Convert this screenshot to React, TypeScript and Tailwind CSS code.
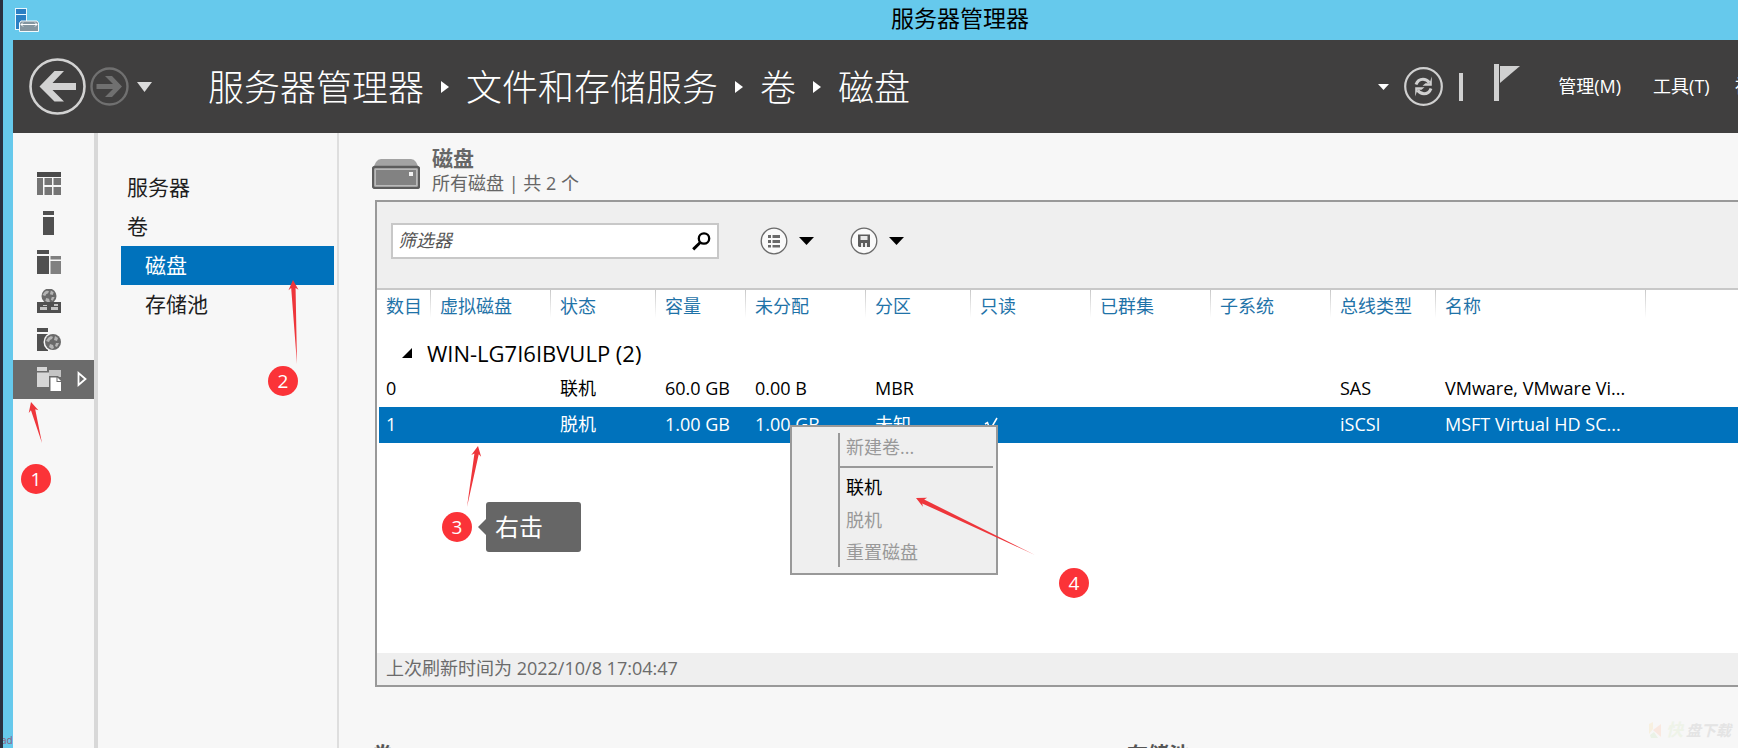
import React from 'react';

const crumbs = ['服务器管理器', '文件和存储服务', '卷', '磁盘'];

const columns = ['数目', '虚拟磁盘', '状态', '容量', '未分配', '分区', '只读', '已群集', '子系统', '总线类型', '名称', ''];

const columnWidths = [
  'w-[51px]', 'w-[120px]', 'w-[105px]', 'w-[90px]', 'w-[120px]', 'w-[105px]',
  'w-[120px]', 'w-[120px]', 'w-[120px]', 'w-[105px]', 'w-[210px]', 'w-auto',
];

type Disk = { cells: string[]; readOnly: boolean; selected: boolean };

const disks: Disk[] = [
  { cells: ['0', '', '联机', '60.0 GB', '0.00 B', 'MBR', '', '', '', 'SAS', 'VMware, VMware Vi...', ''], readOnly: false, selected: false },
  { cells: ['1', '', '脱机', '1.00 GB', '1.00 GB', '未知', '', '', '', 'iSCSI', 'MSFT Virtual HD SC...', ''], readOnly: true, selected: true },
];

function AppIcon() {
  return (
    <svg width="24" height="25" viewBox="0 0 24 25" aria-hidden="true">
      <rect x="0.5" y="0.5" width="11" height="21" fill="#2b7fc4" stroke="#e9f6fc" />
      <path d="M1 6.500h10" stroke="#e9f6fc" />
      <path d="M6 13h16l1.500 2v8.500h-19V15z" fill="#8395a0" stroke="#f3fafd" />
      <path d="M6 16.500h16M8 14.500l-2 2 2 2M20 14.500l2 2-2 2" stroke="#fff" fill="none" />
    </svg>
  );
}

function BackIcon() {
  return (
    <svg width="57" height="57" viewBox="0 0 57 57" aria-hidden="true">
      <circle cx="28.500" cy="28.500" r="27" fill="none" stroke="#d2d2d2" strokeWidth="2.600" />
      <path d="M10.500 28.500 25.500 13h9.500L23.500 25H47v7H23.500L35 43.500h-9.500z" fill="#d2d2d2" />
    </svg>
  );
}

function ForwardIcon() {
  return (
    <svg width="39" height="39" viewBox="0 0 39 39" aria-hidden="true">
      <circle cx="19.500" cy="19.500" r="18" fill="none" stroke="#707070" strokeWidth="2.400" />
      <path d="M32 19.500 22 9h-7l8 8H6.500v5H23l-8 8h7z" fill="#707070" />
    </svg>
  );
}

function Caret({ className, w = 15, h = 8 }: { className?: string; w?: number; h?: number }) {
  return (
    <svg width={w} height={h} viewBox="0 0 15 8" preserveAspectRatio="none" className={className} aria-hidden="true">
      <path d="M0 0h15L7.500 8z" fill="currentColor" />
    </svg>
  );
}

function RefreshIcon() {
  return (
    <svg width="39" height="39" viewBox="0 0 39 39" aria-hidden="true">
      <circle cx="19.500" cy="19.500" r="18.300" fill="none" stroke="#d0d0d0" strokeWidth="2.200" />
      <g fill="none" stroke="#d0d0d0" strokeWidth="3">
        <path d="M12 17.500c1.500-4 3.500-5.300 7-5.300 3 0 4.500 1 6.500 3.500" />
        <path d="M27 21.500c-1.500 4-3.500 5.300-7 5.300-3 0-4.500-1-6.500-3.500" />
      </g>
      <path d="M27.800 9.500v9.300h-9.300l3-2.500h4zM11.200 29.500v-9.300h9.300l-3 2.500h-4z" fill="#d0d0d0" />
    </svg>
  );
}

function FlagIcon() {
  return (
    <svg width="26" height="37" viewBox="0 0 26 37" aria-hidden="true">
      <path d="M0 0h5v37H0z" fill="#d0d0d0" />
      <path d="M6 2h20L6 19z" fill="#d0d0d0" />
    </svg>
  );
}

function DashboardIcon() {
  return (
    <svg width="24" height="24" viewBox="0 0 24 24" aria-hidden="true">
      <path d="M0 0h24v5H0z" fill="#4a4a4a" />
      <path d="M0 6h6v17H0zM7.500 6h7.500v7H7.500zM16.500 6H24v7h-7.500zM7.500 15h7.500v8H7.500zM16.500 15H24v8h-7.500z" fill="#757575" />
    </svg>
  );
}

function ServerIcon() {
  return (
    <svg width="24" height="24" viewBox="0 0 24 24" aria-hidden="true">
      <path d="M6 0h11v4H6zM6 6h11v18H6z" fill="#505050" />
    </svg>
  );
}

function ServersIcon() {
  return (
    <svg width="24" height="24" viewBox="0 0 24 24" aria-hidden="true">
      <path d="M0 0h12v4H0zM0 6h12v18H0z" fill="#505050" />
      <path d="M13.500 6H24v3.500H13.500zM13.500 11H24v13H13.500z" fill="#808080" />
    </svg>
  );
}

function Globe({ cx, cy, r }: { cx: number; cy: number; r: number }) {
  return (
    <g transform={`translate(${cx} ${cy}) scale(${r / 8})`}>
      <circle r="8" fill="#6a6a6a" />
      <path d="M-5-4c2-2 4-2 5-1l-1 2-2 1-1 2-3-1zM2-6l3 2-1 3-3-1zM-3 2l3 1 1 3-2 1-3-2zM3 1l3 0-2 4-2-1z" fill="#b4b4b4" />
    </g>
  );
}

function NetworkIcon() {
  return (
    <svg width="24" height="24" viewBox="0 0 24 24" aria-hidden="true">
      <Globe cx={12} cy={7} r={7.5} />
      <path d="M0 13h24v11H0z" fill="#505050" />
      <path d="M3 18h7v3H3zM14 18h7v3h-7zM6 16h4v1H6zM17 15h4v2h-4z" fill="#c4c4c4" />
    </svg>
  );
}

function WebIcon() {
  return (
    <svg width="24" height="24" viewBox="0 0 24 24" aria-hidden="true">
      <path d="M0 0h11v4H0zM0 6h11v17H0z" fill="#505050" />
      <circle cx="16" cy="14" r="9.500" fill="#f7f7f7" />
      <Globe cx={16} cy={14} r={8} />
    </svg>
  );
}

function StorageIcon() {
  return (
    <svg width="24" height="24" viewBox="0 0 24 24" aria-hidden="true">
      <path d="M0 0h10v4H0zM0 5.500h12V20H0z" fill="#d6d6d6" />
      <path d="M12 3h12v7H12z" fill="#c4c4c4" />
      <path d="M12 9h9l4 4v12H12z" fill="#6b6b6b" />
      <path d="M13.500 10.500h6V15H24v9H13.500z" fill="#fff" />
      <path d="M20.500 10.500 24 14h-3.500z" fill="#fff" />
    </svg>
  );
}

const rail = [
  { label: '仪表板', Icon: DashboardIcon },
  { label: '本地服务器', Icon: ServerIcon },
  { label: '所有服务器', Icon: ServersIcon },
  { label: '远程访问', Icon: NetworkIcon },
  { label: 'IIS', Icon: WebIcon },
  { label: '文件和存储服务', Icon: StorageIcon },
];

function DiskIcon({ className }: { className?: string }) {
  return (
    <svg width="48" height="30" viewBox="0 0 48 30" className={className} aria-hidden="true">
      <path d="M9 0h30q3 0 5 3l3 6v4H1V9l3-6q2-3 5-3z" fill="#a3a3a3" />
      <rect x="1" y="8" width="46" height="21" rx="2" fill="#b9b9b9" stroke="#5c5c5c" strokeWidth="2.400" />
      <rect x="4" y="11" width="40" height="15" fill="#828282" />
      <rect x="37" y="13" width="4" height="4" fill="#f2f2f2" />
    </svg>
  );
}

function ListIcon() {
  return (
    <svg width="28" height="28" viewBox="0 0 28 28" aria-hidden="true">
      <circle cx="14" cy="14" r="12.800" fill="#fafafa" stroke="#6a6a6a" strokeWidth="1.300" />
      <path d="M8 8h3v3H8zM8 13h3v3H8zM8 18h3v2.500H8zM12.500 8H20v3h-7.500zM12.500 13H20v3h-7.500zM12.500 18H20v2.500h-7.500z" fill="#6a6a6a" />
    </svg>
  );
}

function SaveIcon() {
  return (
    <svg width="28" height="28" viewBox="0 0 28 28" aria-hidden="true">
      <circle cx="14" cy="14" r="12.800" fill="#fafafa" stroke="#6a6a6a" strokeWidth="1.300" />
      <path d="M8 7.500h12v12.500H9l-1-1z" fill="#5c5c5c" />
      <path d="M10.500 9h7v4h-7zM11 16h2v4h-2zM15 16h2v4h-2z" fill="#e8e8e8" />
    </svg>
  );
}

function SearchIcon() {
  return (
    <svg width="19" height="19" viewBox="0 0 19 19" aria-hidden="true">
      <circle cx="12" cy="6.500" r="5.200" fill="none" stroke="#000" strokeWidth="2.300" />
      <path d="M8.200 10.500 1.200 17.300" stroke="#000" strokeWidth="3" />
    </svg>
  );
}

function CheckMark() {
  return (
    <svg width="14" height="15" viewBox="0 0 14 15" aria-label="是" role="img">
      <path d="M1 7 3.500 5.500 6 13 13 1" fill="none" stroke="#fff" strokeWidth="1.500" />
    </svg>
  );
}

function Badge({ n, className }: { n: number; className: string }) {
  return (
    <span className={`absolute flex size-[30px] items-center justify-center rounded-full bg-[#fb3338] pb-px text-[19px] leading-7 text-white ${className}`}>
      {n}
    </span>
  );
}

/* Tapered arrow: a wedge from the tail (x2, y2) to a barbed head at the tip (x1, y1). */
function Arrow({ x1, y1, x2, y2, className }: { x1: number; y1: number; x2: number; y2: number; className: string }) {
  const len = Math.hypot(x2 - x1, y2 - y1);
  const angle = (Math.atan2(y2 - y1, x2 - x1) * 180) / Math.PI;
  return (
    <svg width={Math.max(x1, x2) + 8} height={Math.max(y1, y2) + 8} className={`pointer-events-none absolute ${className}`} aria-hidden="true">
      <g transform={`translate(${x1} ${y1}) rotate(${angle})`}>
        <path d={`M0 0 10-5 8-2.200 ${len} 0 8 2.200 10 5z`} fill="#ee363b" />
      </g>
    </svg>
  );
}

export default function App() {
  return (
    <div className="relative flex h-screen flex-col overflow-hidden border-l-[3px] border-[#2a3140] bg-[#66c9ec] font-['Open_Sans','Noto_Sans_CJK_SC',sans-serif] text-lg text-[#1e1e1e]">
      <div className="flex h-10 shrink-0 items-center pl-3">
        <AppIcon />
        <h1 className="flex-1 pb-1 pl-[143px] text-center text-[23px] leading-8 text-black">服务器管理器</h1>
      </div>

      <div className="ml-[10px] flex min-h-0 flex-1 flex-col bg-[#f7f7f7]">
        <header className="flex h-[93px] shrink-0 items-center overflow-hidden bg-[#403f3f] pl-4 text-white">
          <button type="button" aria-label="后退"><BackIcon /></button>
          <button type="button" aria-label="前进" disabled className="ml-1"><ForwardIcon /></button>
          <button type="button" aria-label="历史记录" className="ml-2 text-[#dcdcdc]"><Caret h={10} /></button>
          <nav aria-label="路径" className="ml-14 flex flex-1 items-center whitespace-nowrap font-['Noto_Sans_CJK_SC',sans-serif] text-4xl font-light">
            {crumbs.map((c, i) => (
              <React.Fragment key={c}>
                {i > 0 && (
                  <svg width="8" height="12" viewBox="0 0 8 12" className="mx-[17px] shrink-0" aria-hidden="true">
                    <path d="M0 0l8 6-8 6z" fill="#fff" />
                  </svg>
                )}
                <a href="#" className="pb-1 leading-[48px]">{c}</a>
              </React.Fragment>
            ))}
          </nav>
          <div className="flex shrink-0 items-center whitespace-nowrap">
            <button type="button" aria-label="更多"><Caret w={11} h={6} /></button>
            <button type="button" aria-label="刷新" className="ml-[15px]"><RefreshIcon /></button>
            <span className="ml-4 h-7 w-1 bg-[#d0d0d0]" />
            <button type="button" aria-label="通知" className="mr-[38px] ml-[31px] pb-2"><FlagIcon /></button>
            <button type="button" className="pb-[2px]">管理(M)</button>
            <button type="button" className="ml-8 pb-[2px]">工具(T)</button>
            <button type="button" className="-mr-[54px] ml-[25px] pb-[2px]">视图(V)</button>
          </div>
        </header>

        <div className="flex min-h-0 flex-1">
          <nav aria-label="角色" className="flex w-[81px] shrink-0 flex-col pt-8">
            {rail.map(({ label, Icon }, i) => (
              <a
                key={label}
                href="#"
                aria-label={label}
                className={i === 5 ? 'flex h-[39px] items-center bg-[#6b6b6b] pb-[2px] pl-6' : 'flex h-[39px] items-center pb-[2px] pl-6'}
              >
                <Icon />
                {i === 5 && (
                  <svg width="10" height="16" viewBox="0 0 10 16" className="ml-4" aria-hidden="true">
                    <path d="M1.500 2v12L8.500 8z" fill="none" stroke="#fff" strokeWidth="1.800" />
                  </svg>
                )}
              </a>
            ))}
          </nav>
          <div className="w-1 shrink-0 bg-[#d8d8d8]" />

          <nav aria-label="文件和存储服务" className="flex w-[241px] shrink-0 flex-col border-r-2 border-[#dedede] pt-[35px] pr-[3px] pl-[23px] text-[21px] leading-[39px]">
            <a href="#" className="pl-[6px]">服务器</a>
            <a href="#" className="pl-[6px]">卷</a>
            <a href="#" className="bg-[#0072bc] pl-6 text-white">磁盘</a>
            <a href="#" className="pl-6">存储池</a>
          </nav>

          <main className="min-w-0 flex-1 pt-3 pl-[33px]">
            <div className="flex h-[55px] items-start gap-3">
              <DiskIcon className="mt-[14px]" />
              <div className="text-[#666]">
                <h2 className="text-[21px] leading-[26px] font-bold">磁盘</h2>
                <p className="leading-6">所有磁盘 | 共 2 个</p>
              </div>
            </div>

            <section className="ml-[3px] border-2 border-r-0 border-[#999] bg-white">
              <div className="flex h-[86px] items-center bg-[#efefef] pb-2 pl-[14px]">
                <div className="flex h-9 w-[328px] items-center border-2 border-[#c8c8c8] bg-white pr-[6px] pl-[5px]">
                  <input
                    type="text"
                    aria-label="筛选器"
                    placeholder="筛选器"
                    className="h-8 min-w-0 flex-1 pb-[2px] italic outline-none placeholder:text-[#555]"
                  />
                  <SearchIcon />
                </div>
                <button type="button" aria-label="视图" className="ml-[41px] flex items-center gap-[11px] text-black">
                  <ListIcon />
                  <Caret />
                </button>
                <button type="button" aria-label="保存" className="ml-9 flex items-center gap-[11px] text-black">
                  <SaveIcon />
                  <Caret />
                </button>
              </div>

              <div className="h-[365px] border-t-2 border-[#c8c8c8] pl-[2px]">
                <table className="w-full table-fixed border-collapse text-left whitespace-nowrap">
                  <colgroup>
                    {columnWidths.map((w, i) => <col key={i} className={w} />)}
                  </colgroup>
                  <thead>
                    <tr className="h-[45px] align-top text-[#1f73a8]">
                      {columns.map((c, i) => (
                        <th
                          key={i}
                          className={
                            i === 0
                              ? 'pl-[7px] font-normal leading-8'
                              : 'bg-linear-to-b from-[#c8c8c8] to-transparent bg-[length:1px_28px] bg-no-repeat pl-[10px] font-normal leading-8'
                          }
                        >
                          {c}
                        </th>
                      ))}
                    </tr>
                  </thead>
                  <tbody>
                    <tr className="h-9">
                      <th colSpan={12} className="pl-[23px] font-normal">
                        <span className="flex items-center gap-[15px] text-[22px] leading-9 text-black">
                          <svg width="10" height="10" viewBox="0 0 10 10" aria-hidden="true">
                            <path d="M10 0v10H0z" fill="#000" />
                          </svg>
                          WIN-LG7I6IBVULP (2)
                        </span>
                      </th>
                    </tr>
                    {disks.map((d) => (
                      <tr key={d.cells[0]} className={d.selected ? 'h-9 bg-[#0072bc] text-white' : 'h-9 text-black'}>
                        {d.cells.map((c, i) => (
                          <td key={i} className={i === 0 ? 'pb-[2px] pl-[7px]' : 'pb-[2px] pl-[10px]'}>
                            {i === 6 && d.readOnly ? <span className="flex pl-1"><CheckMark /></span> : c}
                          </td>
                        ))}
                      </tr>
                    ))}
                  </tbody>
                </table>
              </div>

              <footer className="bg-[#efefef] pb-[2px] pl-[9px] leading-[30px] text-[#6b6b6b]">上次刷新时间为 2022/10/8 17:04:47</footer>
            </section>

            <div className="mt-[53px] flex text-[21px] leading-7 font-bold text-[#555]">
              <h2 className="w-[755px] shrink-0">卷</h2>
              <h2>存储池</h2>
            </div>
          </main>
        </div>
      </div>

      <div role="menu" className="absolute top-[425px] left-[787px] w-[208px] border-2 border-[#999] bg-[#efefef] py-[6px] pr-[3px] pl-[46px]">
        <div className="flex flex-col border-l-2 border-[#999] text-[#999]">
          <button type="button" role="menuitem" disabled className="h-[33px] pb-[10px] pl-[6px] text-left">新建卷...</button>
          <div className="h-[2px] bg-[#999]" />
          <button type="button" role="menuitem" className="mt-[2px] h-[33px] pl-[6px] text-left text-black">联机</button>
          <button type="button" role="menuitem" disabled className="h-[33px] pl-[6px] text-left">脱机</button>
          <button type="button" role="menuitem" disabled className="h-[31px] pl-[6px] text-left">重置磁盘</button>
        </div>
      </div>

      <Arrow x1={8} y1={8} x2={19} y2={49} className="top-[394px] left-[20px]" />
      <Arrow x1={8} y1={8} x2={12} y2={92} className="top-[272px] left-[282px]" />
      <Arrow x1={19} y1={8} x2={8} y2={69} className="top-[438px] left-[456px]" />
      <Arrow x1={8} y1={8} x2={127} y2={65} className="top-[490px] left-[905px]" />

      <Badge n={1} className="top-[464px] left-[18px]" />
      <Badge n={2} className="top-[366px] left-[265px]" />
      <Badge n={3} className="top-[512px] left-[439px]" />
      <Badge n={4} className="top-[568px] left-[1056px]" />

      <div role="tooltip" className="absolute top-[502px] left-[475px] flex items-center">
        <svg width="8" height="16" viewBox="0 0 8 16" aria-hidden="true">
          <path d="M8 0v16L0 8z" fill="#666" />
        </svg>
        <span className="w-[95px] rounded-[3px] bg-[#666] pl-[9px] text-2xl leading-[50px] text-white">右击</span>
      </div>

      <span className="absolute bottom-[2px] -left-[2px] text-[10px] leading-3 text-[#8d5a78]">ad</span>

      <div className="absolute right-[7px] bottom-2 flex items-center gap-[3px] text-[15px] leading-5 font-bold italic text-[#e4e4e4]">
        <svg width="14" height="17" viewBox="0 0 14 17" aria-hidden="true">
          <path d="M0 2l4-2v7L0 12z" fill="#f7f0e0" />
          <path d="M12 2v13L4 8z" fill="#f9e8e0" />
          <path d="M1 13l4-3 4 6H2z" fill="#eaf2e6" />
        </svg>
        <span className="text-[17px] text-[#eef3e8]">快</span>
        <span>盘下载</span>
      </div>
    </div>
  );
}
